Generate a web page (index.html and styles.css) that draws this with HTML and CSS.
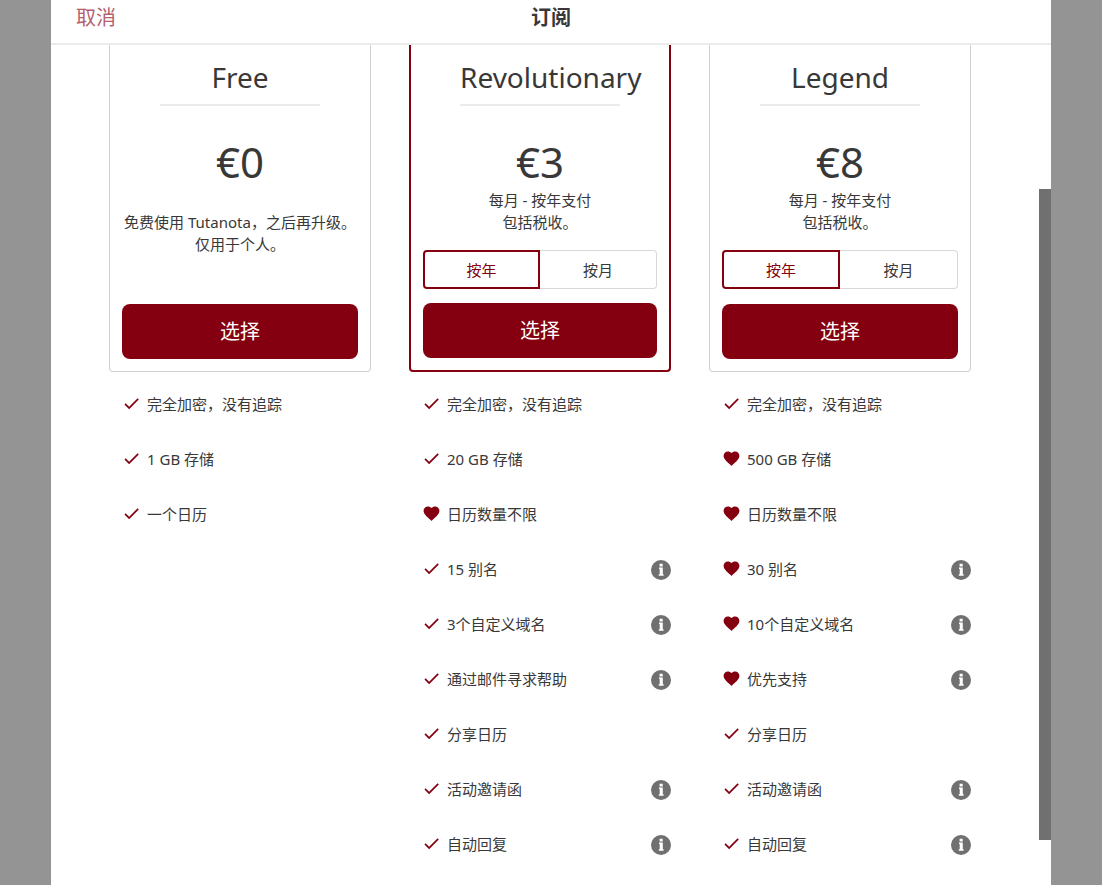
FILE: index.html
```html
<!DOCTYPE html>
<html lang="zh-CN">
<head>
<meta charset="utf-8">
<meta name="viewport" content="width=device-width, initial-scale=1">
<title>订阅</title>
<link rel="stylesheet" href="styles.css">
</head>
<body>
<svg class="sprite" aria-hidden="true">
  <symbol id="check" viewBox="0 0 24 24"><path d="M9 16.2 4.6 11.8l-1.5 1.5L9 19.2 21.2 6.9l-1.5-1.5z"/></symbol>
  <symbol id="heart" viewBox="0 0 24 24"><path d="M12 21.35l-1.45-1.32C5.4 15.36 2 12.28 2 8.5 2 5.42 4.42 3 7.5 3c1.74 0 3.41.81 4.5 2.09C13.09 3.81 14.76 3 16.5 3 19.58 3 22 5.42 22 8.5c0 3.78-3.4 6.86-8.55 11.54z"/></symbol>
  <symbol id="info" viewBox="0 0 20 20"><circle cx="10" cy="10" r="10"/><path fill="#fff" d="M8.6 3.8h3.1v2.6H8.6zM8 7.5h3.8v6.8h.8v1.5H7.8v-1.5h.9V9H8z"/></symbol>
</svg>
<div class="dialog" role="dialog" aria-labelledby="dialog-title">
  <header class="header">
    <button class="cancel" type="button">取消</button>
    <h1 class="title" id="dialog-title">订阅</h1>
  </header>
  <div class="body">
    <main class="plans">
      <section class="card">
        <h2 class="name">Free</h2>
        <p class="price">€0</p>
        <p class="note note-free">免费使用 Tutanota，之后再升级。<br>仅用于个人。</p>
        <button class="select" type="button">选择</button>
      </section>
      <section class="card card-active">
        <h2 class="name">Revolutionary</h2>
        <p class="price">€3</p>
        <p class="note">每月 - 按年支付<br>包括税收。</p>
        <div class="segments">
          <button class="segment segment-on" type="button" aria-pressed="true">按年</button>
          <button class="segment" type="button" aria-pressed="false">按月</button>
        </div>
        <button class="select" type="button">选择</button>
      </section>
      <section class="card">
        <h2 class="name">Legend</h2>
        <p class="price">€8</p>
        <p class="note">每月 - 按年支付<br>包括税收。</p>
        <div class="segments">
          <button class="segment segment-on" type="button" aria-pressed="true">按年</button>
          <button class="segment" type="button" aria-pressed="false">按月</button>
        </div>
        <button class="select" type="button">选择</button>
      </section>
      <ul class="features">
        <li class="feature"><svg class="mark"><use href="#check"/></svg>完全加密，没有追踪</li>
        <li class="feature"><svg class="mark"><use href="#check"/></svg>1 GB 存储</li>
        <li class="feature"><svg class="mark"><use href="#check"/></svg>一个日历</li>
      </ul>
      <ul class="features">
        <li class="feature"><svg class="mark"><use href="#check"/></svg>完全加密，没有追踪</li>
        <li class="feature"><svg class="mark"><use href="#check"/></svg>20 GB 存储</li>
        <li class="feature"><svg class="mark"><use href="#heart"/></svg>日历数量不限</li>
        <li class="feature"><svg class="mark"><use href="#check"/></svg>15 别名<button class="info" type="button" aria-label="信息"><svg class="info-icon"><use href="#info"/></svg></button></li>
        <li class="feature"><svg class="mark"><use href="#check"/></svg>3个自定义域名<button class="info" type="button" aria-label="信息"><svg class="info-icon"><use href="#info"/></svg></button></li>
        <li class="feature"><svg class="mark"><use href="#check"/></svg>通过邮件寻求帮助<button class="info" type="button" aria-label="信息"><svg class="info-icon"><use href="#info"/></svg></button></li>
        <li class="feature"><svg class="mark"><use href="#check"/></svg>分享日历</li>
        <li class="feature"><svg class="mark"><use href="#check"/></svg>活动邀请函<button class="info" type="button" aria-label="信息"><svg class="info-icon"><use href="#info"/></svg></button></li>
        <li class="feature"><svg class="mark"><use href="#check"/></svg>自动回复<button class="info" type="button" aria-label="信息"><svg class="info-icon"><use href="#info"/></svg></button></li>
      </ul>
      <ul class="features">
        <li class="feature"><svg class="mark"><use href="#check"/></svg>完全加密，没有追踪</li>
        <li class="feature"><svg class="mark"><use href="#heart"/></svg>500 GB 存储</li>
        <li class="feature"><svg class="mark"><use href="#heart"/></svg>日历数量不限</li>
        <li class="feature"><svg class="mark"><use href="#heart"/></svg>30 别名<button class="info" type="button" aria-label="信息"><svg class="info-icon"><use href="#info"/></svg></button></li>
        <li class="feature"><svg class="mark"><use href="#heart"/></svg>10个自定义域名<button class="info" type="button" aria-label="信息"><svg class="info-icon"><use href="#info"/></svg></button></li>
        <li class="feature"><svg class="mark"><use href="#heart"/></svg>优先支持<button class="info" type="button" aria-label="信息"><svg class="info-icon"><use href="#info"/></svg></button></li>
        <li class="feature"><svg class="mark"><use href="#check"/></svg>分享日历</li>
        <li class="feature"><svg class="mark"><use href="#check"/></svg>活动邀请函<button class="info" type="button" aria-label="信息"><svg class="info-icon"><use href="#info"/></svg></button></li>
        <li class="feature"><svg class="mark"><use href="#check"/></svg>自动回复<button class="info" type="button" aria-label="信息"><svg class="info-icon"><use href="#info"/></svg></button></li>
      </ul>
    </main>
    <div class="track" aria-hidden="true"><div class="thumb"></div></div>
  </div>
</div>
</body>
</html>
```
FILE: styles.css
```css
* {
  box-sizing: border-box;
}

body {
  margin: 0;
  background: #949494;
  color: #383838;
  font-family: "Noto Sans", "Noto Sans CJK SC", sans-serif;
  font-size: 15px;
  line-height: 22px;
}

button {
  padding: 0;
  border: 0;
  background: none;
  color: inherit;
  font: inherit;
  cursor: pointer;
}

h1, h2, p, ul {
  margin: 0;
  padding: 0;
}

.sprite {
  display: none;
}

.dialog {
  display: flex;
  flex-direction: column;
  max-width: 1000px;
  min-height: 100vh;
  margin: 0 auto;
  background: #fff;
}

.header {
  display: grid;
  grid-template-columns: 1fr auto 1fr;
  align-items: center;
  padding: 0 25px 7px;
  border-bottom: 2px solid #ebebeb;
}

.cancel {
  justify-self: start;
  color: #b2606c;
  font-size: 20px;
  line-height: 36px;
}

.title {
  font-size: 20px;
  line-height: 36px;
}

.body {
  display: flex;
  flex: 1;
}

.plans {
  display: grid;
  flex: 1;
  grid-template-columns: repeat(3, minmax(0, 1fr));
  grid-template-rows: auto 1fr;
  column-gap: 38px;
  padding: 0 68px 0 58px;
}

.card {
  display: flex;
  flex-direction: column;
  padding: 12px;
  border: 1px solid #d0d0d0;
  border-top: 0;
  border-radius: 0 0 4px 4px;
  text-align: center;
}

.card-active {
  border-color: #840010;
  border-width: 0 2px 2px;
}

.name {
  width: 160px;
  margin: 0 auto;
  padding-bottom: 7px;
  border-bottom: 2px solid #ebebeb;
  font-size: 28px;
  font-weight: 400;
  line-height: 40px;
  white-space: nowrap;
}

.price {
  padding-top: 28px;
  font-size: 42px;
  line-height: 55px;
}

.note-free {
  padding-top: 22px;
}

.segments {
  display: flex;
  margin: 17px 0 14px;
}

.segment {
  width: 50%;
  height: 39px;
  border: 1px solid #d8d8d8;
  border-left: 0;
  border-radius: 0 4px 4px 0;
}

.segment-on {
  border: 2px solid #840010;
  border-radius: 4px 0 0 4px;
  color: #840010;
}

.select {
  height: 55px;
  margin-top: auto;
  border-radius: 8px;
  background: #840010;
  color: #fff;
  font-size: 20px;
}

.features {
  padding: 4px 0 0 13px;
  list-style: none;
}

.feature {
  display: flex;
  align-items: center;
  gap: 6px;
  height: 55px;
}

.mark {
  width: 19px;
  height: 19px;
  fill: #840010;
}

.info {
  display: flex;
  margin: 2px 0 0 auto;
}

.info-icon {
  width: 20px;
  height: 20px;
  fill: #707070;
}

.track {
  display: flex;
  width: 12px;
  padding: 144px 0 45px;
}

.thumb {
  flex: 1;
  background: #707070;
}
```
